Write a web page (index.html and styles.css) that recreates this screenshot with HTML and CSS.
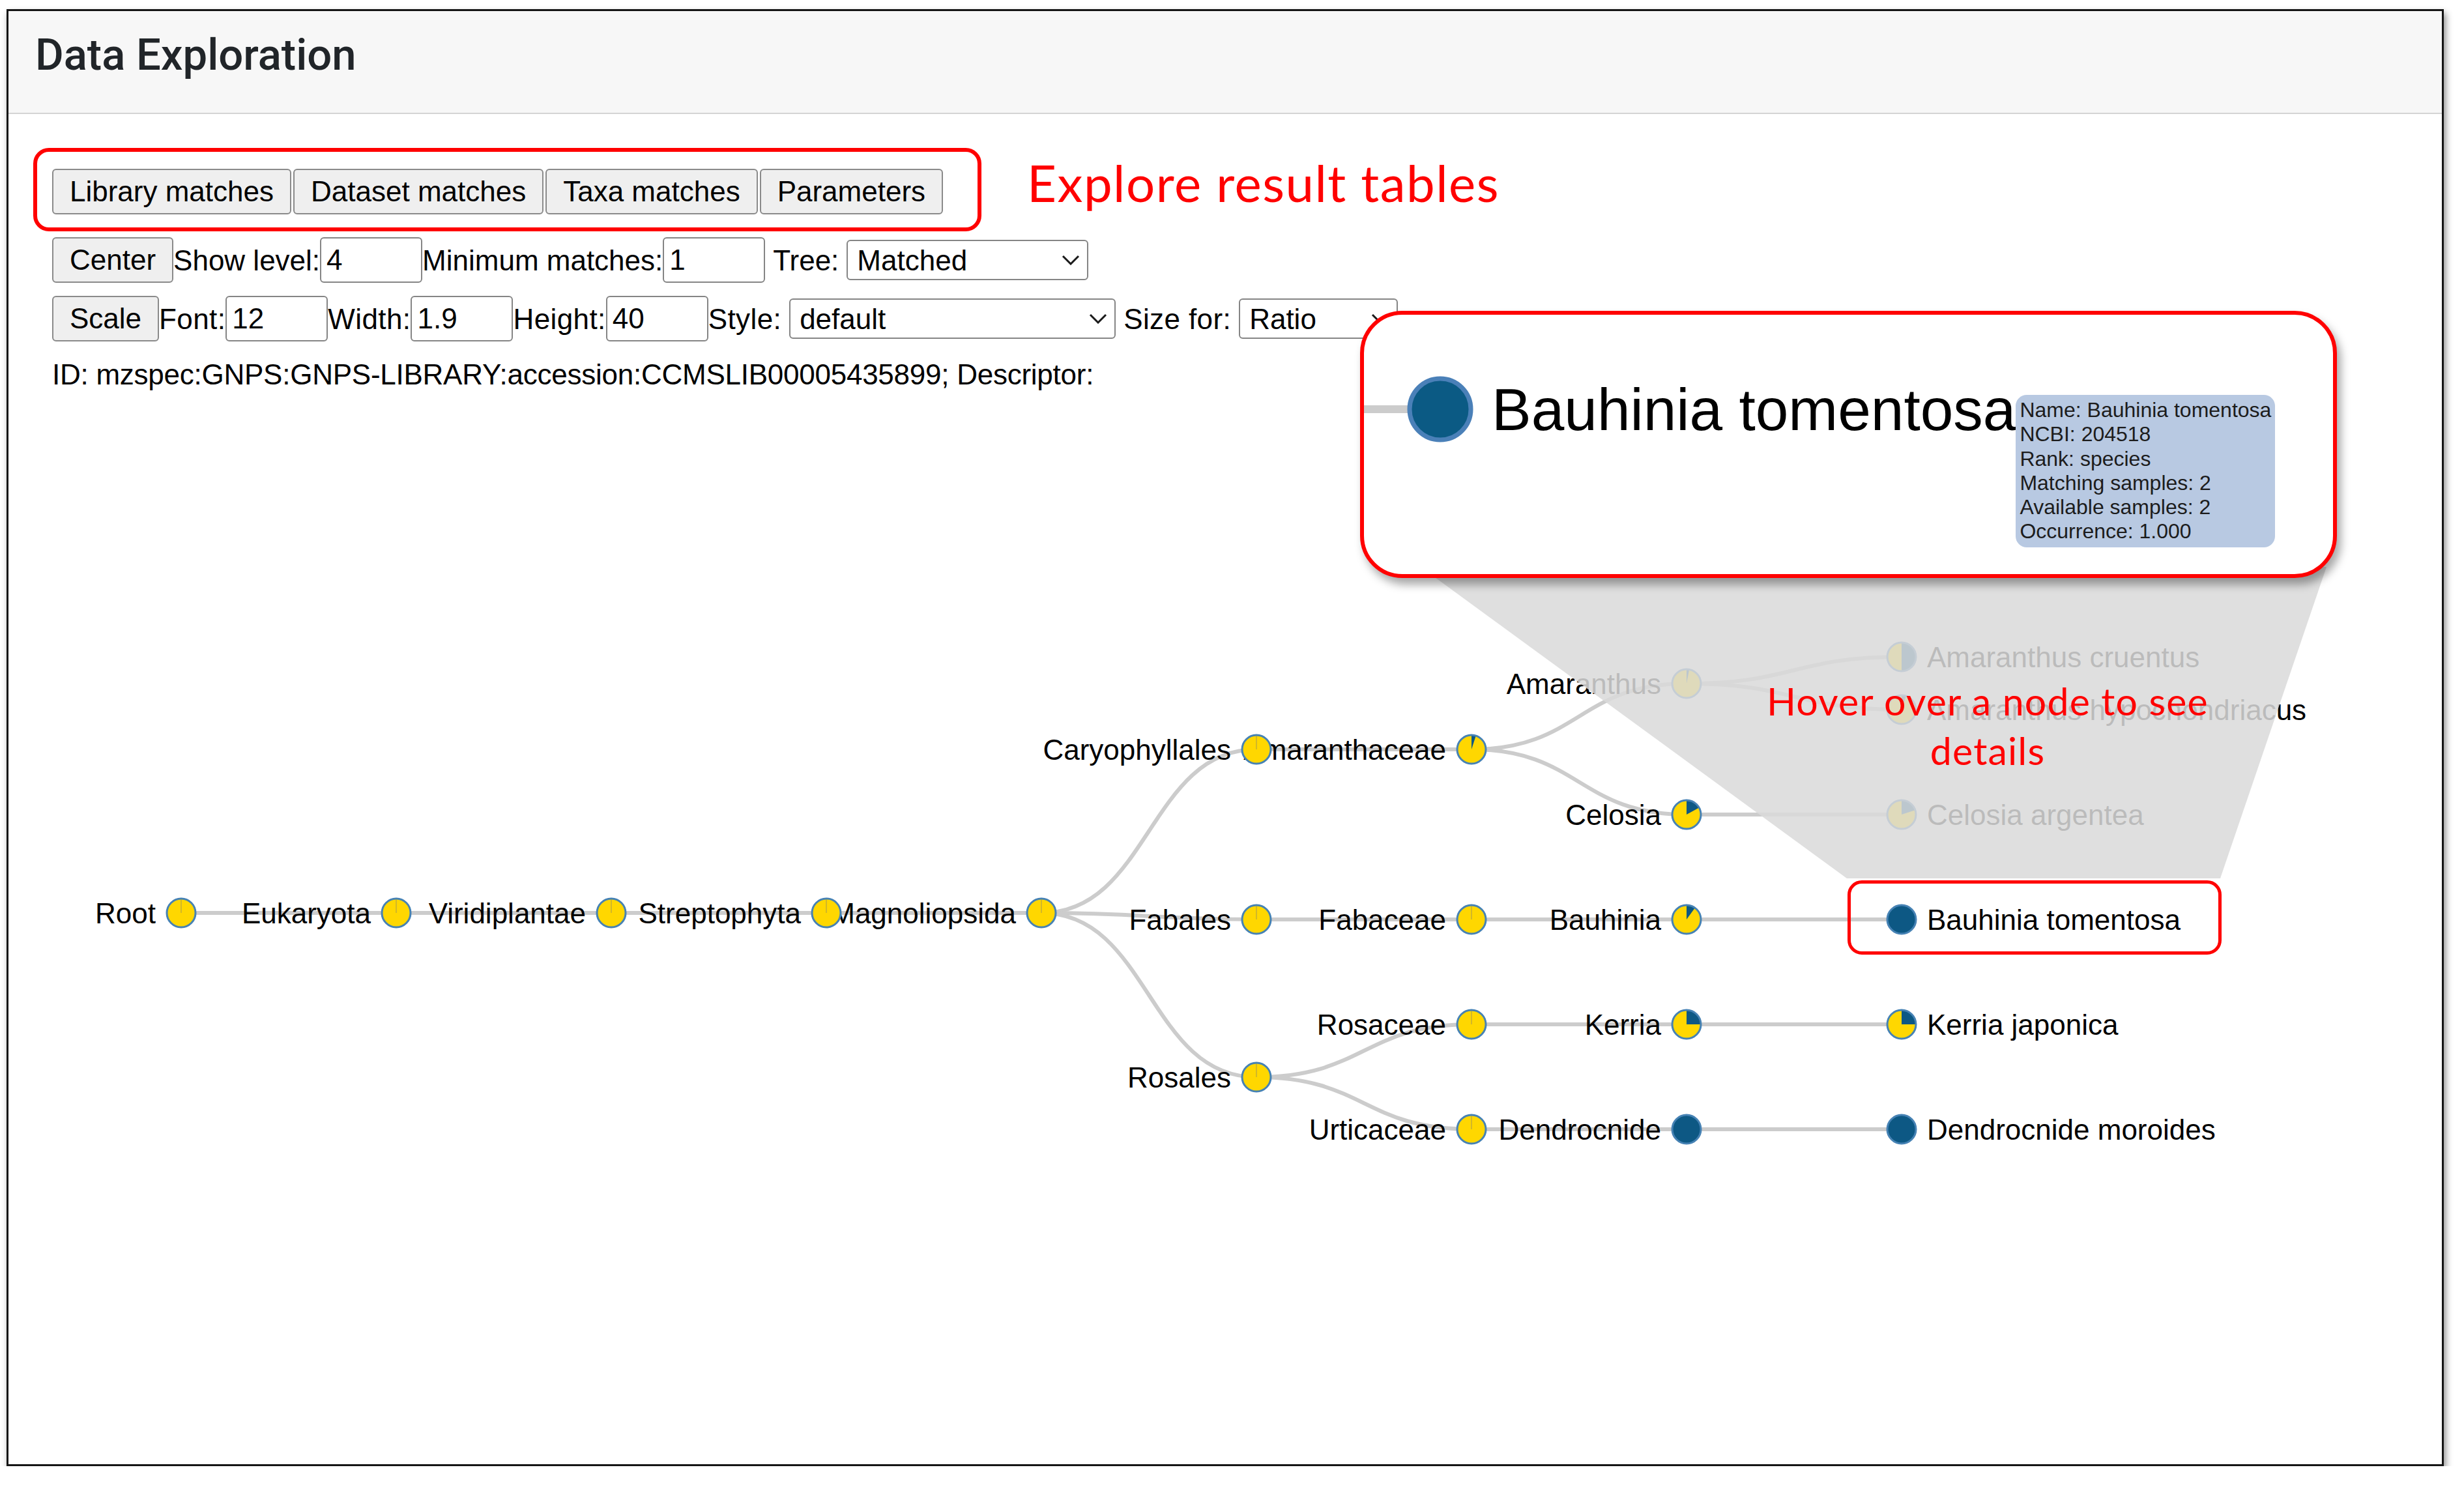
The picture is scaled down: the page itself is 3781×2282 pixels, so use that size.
FILE: index.html
```html
<!DOCTYPE html>
<html lang="en">
<head>
<meta charset="utf-8">
<title>Data Exploration</title>
<link rel="stylesheet" href="styles.css">
</head>
<body>
<div class="frame">
  <div class="card-header"><h1 class="title">Data Exploration</h1></div>
  <div class="card-body">
    <div class="row row-tabs">
      <button class="btn">Library matches</button>
      <button class="btn">Dataset matches</button>
      <button class="btn">Taxa matches</button>
      <button class="btn">Parameters</button>
    </div>
    <div class="row row-2">
      <button class="btn">Center</button>
      <span class="lbl">Show level:</span>
      <input class="num" value="4">
      <span class="lbl">Minimum matches:</span>
      <input class="num" value="1">
      <span class="lbl spaced">Tree:</span>
      <span class="select-wrap sel-tree"><select><option>Matched</option></select><svg class="chev" viewBox="0 0 28 16"><path d="M2 2 L14 14 L26 2" /></svg></span>
    </div>
    <div class="row row-3">
      <button class="btn">Scale</button>
      <span class="lbl">Font:</span>
      <input class="num" value="12">
      <span class="lbl">Width:</span>
      <input class="num" value="1.9">
      <span class="lbl">Height:</span>
      <input class="num" value="40">
      <span class="lbl trail">Style:</span>
      <span class="select-wrap sel-style"><select><option>default</option></select><svg class="chev" viewBox="0 0 28 16"><path d="M2 2 L14 14 L26 2" /></svg></span>
      <span class="lbl spaced">Size for:</span>
      <span class="select-wrap sel-ratio"><select><option>Ratio</option></select><svg class="chev" viewBox="0 0 28 16"><path d="M2 2 L14 14 L26 2" /></svg></span>
    </div>
    <div class="id-line">ID: mzspec:GNPS:GNPS-LIBRARY:accession:CCMSLIB00005435899; Descriptor:</div>
  </div>

  <svg class="tree" width="3734" height="1647" viewBox="13 600 3734 1647">
    <g class="links">
      <path d="M278,1401 L608,1401"/>
      <path d="M608,1401 L938,1401"/>
      <path d="M938,1401 L1268,1401"/>
      <path d="M1268,1401 L1598,1401"/>
      <path d="M1598,1401 C1763,1401 1763,1150 1928,1150"/>
      <path d="M1598,1401 C1763,1401 1763,1411 1928,1411"/>
      <path d="M1598,1401 C1763,1401 1763,1653 1928,1653"/>
      <path d="M1928,1150 L2258,1150"/>
      <path d="M1928,1411 L2258,1411"/>
      <path d="M1928,1653 C2093,1653 2093,1572 2258,1572"/>
      <path d="M1928,1653 C2093,1653 2093,1733 2258,1733"/>
      <path d="M2258,1150 C2423,1150 2423,1049 2588,1049"/>
      <path d="M2258,1150 C2423,1150 2423,1250 2588,1250"/>
      <path d="M2258,1411 L2588,1411"/>
      <path d="M2258,1572 L2588,1572"/>
      <path d="M2258,1733 L2588,1733"/>
      <path d="M2588,1049 C2753,1049 2753,1008 2918,1008"/>
      <path d="M2588,1049 C2753,1049 2753,1089 2918,1089"/>
      <path d="M2588,1250 L2918,1250"/>
      <path d="M2588,1411 L2918,1411"/>
      <path d="M2588,1572 L2918,1572"/>
      <path d="M2588,1733 L2918,1733"/>
    </g>
    <g class="labels">
      <text class="end" x="239" y="1417">Root</text>
      <text class="end" x="569" y="1417">Eukaryota</text>
      <text class="end" x="899" y="1417">Viridiplantae</text>
      <text class="end" x="1229" y="1417">Streptophyta</text>
      <text class="end" x="1559" y="1417">Magnoliopsida</text>
      <text class="end" x="1889" y="1166">Caryophyllales</text>
      <text class="end" x="1889" y="1427">Fabales</text>
      <text class="end" x="1889" y="1669">Rosales</text>
      <text class="end" x="2219" y="1166">Amaranthaceae</text>
      <text class="end" x="2219" y="1427">Fabaceae</text>
      <text class="end" x="2219" y="1588">Rosaceae</text>
      <text class="end" x="2219" y="1749">Urticaceae</text>
      <text class="end" x="2549" y="1065">Amaranthus</text>
      <text class="end" x="2549" y="1266">Celosia</text>
      <text class="end" x="2549" y="1427">Bauhinia</text>
      <text class="end" x="2549" y="1588">Kerria</text>
      <text class="end" x="2549" y="1749">Dendrocnide</text>
      <text x="2957" y="1024">Amaranthus cruentus</text>
      <text x="2957" y="1105">Amaranthus hypochondriacus</text>
      <text x="2957" y="1266">Celosia argentea</text>
      <text x="2957" y="1427">Bauhinia tomentosa</text>
      <text x="2957" y="1588">Kerria japonica</text>
      <text x="2957" y="1749">Dendrocnide moroides</text>
    </g>
    <g class="nodes">
      <g transform="translate(278,1401)"><circle class="y" r="22"/><path class="tick" d="M0,0 L0,-22"/><circle class="ring" r="22"/></g>
      <g transform="translate(608,1401)"><circle class="y" r="22"/><path class="tick" d="M0,0 L0,-22"/><circle class="ring" r="22"/></g>
      <g transform="translate(938,1401)"><circle class="y" r="22"/><path class="tick" d="M0,0 L0,-22"/><circle class="ring" r="22"/></g>
      <g transform="translate(1268,1401)"><circle class="y" r="22"/><path class="tick" d="M0,0 L0,-22"/><circle class="ring" r="22"/></g>
      <g transform="translate(1598,1401)"><circle class="y" r="22"/><path class="tick" d="M0,0 L0,-22"/><circle class="ring" r="22"/></g>
      <g transform="translate(1928,1150)"><circle class="y" r="22"/><path class="tick" d="M0,0 L0,-22"/><circle class="ring" r="22"/></g>
      <g transform="translate(1928,1411)"><circle class="y" r="22"/><path class="tick" d="M0,0 L0,-22"/><circle class="ring" r="22"/></g>
      <g transform="translate(1928,1653)"><circle class="y" r="22"/><path class="tick" d="M0,0 L0,-22"/><circle class="ring" r="22"/></g>
      <g transform="translate(2258,1150)"><circle class="y" r="22"/><path class="b" d="M0,0 L0,-22 A22,22 0 0 1 6.8,-20.92 Z"/><circle class="ring" r="22"/></g>
      <g transform="translate(2258,1411)"><circle class="y" r="22"/><path class="tick" d="M0,0 L0,-22"/><circle class="ring" r="22"/></g>
      <g transform="translate(2258,1572)"><circle class="y" r="22"/><path class="tick" d="M0,0 L0,-22"/><circle class="ring" r="22"/></g>
      <g transform="translate(2258,1733)"><circle class="y" r="22"/><path class="tick" d="M0,0 L0,-22"/><circle class="ring" r="22"/></g>
      <g transform="translate(2588,1049)"><circle class="y" r="22"/><path class="b" d="M0,0 L0,-22 A22,22 0 0 1 4.12,-21.61 Z"/><circle class="ring" r="22"/></g>
      <g transform="translate(2588,1250)"><circle class="y" r="22"/><path class="b" d="M0,0 L0,-22 A22,22 0 0 1 19.27,-10.6 Z"/><circle class="ring" r="22"/></g>
      <g transform="translate(2588,1411)"><circle class="y" r="22"/><path class="b" d="M0,0 L0,-22 A22,22 0 0 1 12.93,-17.8 Z"/><circle class="ring" r="22"/></g>
      <g transform="translate(2588,1572)"><circle class="y" r="22"/><path class="b" d="M0,0 L0,-22 A22,22 0 0 1 22,0 Z"/><circle class="ring" r="22"/></g>
      <g transform="translate(2588,1733)"><circle class="full" r="22"/><circle class="ring" r="22"/></g>
      <g transform="translate(2918,1008)"><circle class="y" r="22"/><path class="b" d="M0,0 L0,-22 A22,22 0 0 1 0,22 Z"/><circle class="ring" r="22"/></g>
      <g transform="translate(2918,1089)"><circle class="y" r="22"/><path class="b" d="M0,0 L0,-22 A22,22 0 0 1 6.8,-20.92 Z"/><circle class="ring" r="22"/></g>
      <g transform="translate(2918,1250)"><circle class="y" r="22"/><path class="b" d="M0,0 L0,-22 A22,22 0 0 1 20.92,-6.8 Z"/><circle class="ring" r="22"/></g>
      <g transform="translate(2918,1411)"><circle class="full" r="22"/><circle class="ring" r="22"/></g>
      <g transform="translate(2918,1572)"><circle class="y" r="22"/><path class="b" d="M0,0 L0,-22 A22,22 0 0 1 22,0 Z"/><circle class="ring" r="22"/></g>
      <g transform="translate(2918,1733)"><circle class="full" r="22"/><circle class="ring" r="22"/></g>
    </g>
    <polygon class="lens" points="2180,870 3570,870 3407,1348 2834,1348"/>
  </svg>

  <div class="note-box"></div>
  <div class="note-explore">Explore result tables</div>

  <div class="note-hover">Hover over a node to see<br>details</div>
  <div class="pointer-box"></div>

  <div class="callout">
    <div class="zoom-link"></div>
    <svg class="zoom-node" viewBox="0 0 102 102"><circle cx="51" cy="51" r="47" /></svg>
    <div class="zoom-name">Bauhinia tomentosa</div>
    <div class="tooltip">Name: Bauhinia tomentosa<br>NCBI: 204518<br>Rank: species<br>Matching samples: 2<br>Available samples: 2<br>Occurrence: 1.000</div>
  </div>
</div>
</body>
</html>
```
FILE: styles.css
```css
html, body {
  margin: 0;
  padding: 0;
  background: #ffffff;
}

body {
  font-family: "Liberation Sans", Arial, sans-serif;
  color: #000;
}

.frame {
  position: relative;
  box-sizing: border-box;
  width: 3740px;
  height: 2236px;
  margin: 14px 0 0 10px;
  border: 3px solid #151515;
  background: #ffffff;
  box-shadow: 3px 6px 10px rgba(0, 0, 0, 0.45);
  overflow: hidden;
}

.card-header {
  box-sizing: border-box;
  height: 158px;
  padding: 27px 0 0 41px;
  background: #f7f7f7;
  border-bottom: 2px solid #d4d4d4;
}

.title {
  margin: 0;
  font-family: Roboto, "Liberation Sans", sans-serif;
  font-weight: 500;
  font-size: 67px;
  line-height: 80px;
  color: #212529;
}

.card-body {
  padding: 84px 0 0 67px;
}

.row {
  display: flex;
  align-items: center;
}

.row-tabs {
  gap: 3px;
}

.row-2 {
  margin-top: 35px;
}

.row-3 {
  margin-top: 20px;
}

.btn {
  box-sizing: border-box;
  height: 70px;
  padding: 0 25px;
  font-family: "Liberation Sans", Arial, sans-serif;
  font-size: 44px;
  color: #000;
  background: #efefef;
  border: 2px solid #8a8a8a;
  border-radius: 6px;
}

.lbl {
  font-size: 44px;
  line-height: 51px;
  white-space: nowrap;
}

.row-3 .lbl {
  letter-spacing: 0.4px;
}

.spaced {
  margin: 0 12px;
}

.trail {
  margin-right: 12px;
}

.num {
  box-sizing: border-box;
  width: 157px;
  height: 70px;
  padding: 0 8px;
  font-family: "Liberation Sans", Arial, sans-serif;
  font-size: 44px;
  color: #000;
  background: #fff;
  border: 2px solid #858585;
  border-radius: 6px;
}

.select-wrap {
  position: relative;
  display: block;
}

.select-wrap select {
  appearance: none;
  -webkit-appearance: none;
  display: block;
  box-sizing: border-box;
  height: 62px;
  padding: 0 0 0 14px;
  font-family: "Liberation Sans", Arial, sans-serif;
  font-size: 44px;
  color: #000;
  background: #fff;
  border: 2px solid #858585;
  border-radius: 6px;
}

.sel-tree select { width: 371px; }
.sel-style select { width: 501px; }
.sel-ratio select { width: 244px; }

.chev {
  position: absolute;
  right: 13px;
  top: 23px;
  width: 28px;
  height: 16px;
  fill: none;
  stroke: #1a1a1a;
  stroke-width: 3;
}

.id-line {
  margin-top: 25px;
  font-size: 44px;
  line-height: 51px;
  letter-spacing: -0.25px;
  white-space: nowrap;
}

.tree {
  display: block;
}

.links path {
  fill: none;
  stroke: #cccccc;
  stroke-width: 6;
}

.labels text {
  font-family: "Liberation Sans", Arial, sans-serif;
  font-size: 44px;
  fill: #000;
}

.labels text.end {
  text-anchor: end;
}

.nodes .y { fill: #ffd700; }
.nodes .b { fill: #0d5884; }
.nodes .full { fill: #0d5884; }
.nodes .tick { stroke: rgba(120, 120, 120, 0.55); stroke-width: 1.2; fill: none; }
.nodes .ring { fill: none; stroke: #4682b4; stroke-width: 3; }

.lens {
  fill: rgba(218, 218, 218, 0.86);
}

/* annotation overlays */
.note-box {
  position: absolute;
  left: 38px;
  top: 210px;
  width: 1455px;
  height: 128px;
  box-sizing: border-box;
  border: 6px solid #ff0000;
  border-radius: 24px;
}

.note-explore {
  position: absolute;
  left: 1563px;
  top: 218px;
  font-family: Lato, "Open Sans", sans-serif;
  font-size: 78px;
  line-height: 91px;
  letter-spacing: 1.5px;
  color: #ff0000;
  white-space: nowrap;
}

.note-hover {
  position: absolute;
  left: 2587px;
  top: 1021px;
  width: 900px;
  text-align: center;
  font-family: Lato, "Open Sans", sans-serif;
  font-size: 59px;
  line-height: 76px;
  letter-spacing: 1.2px;
  color: #ff0000;
}

.pointer-box {
  position: absolute;
  left: 2822px;
  top: 1334px;
  width: 574px;
  height: 114px;
  box-sizing: border-box;
  border: 5px solid #ff0000;
  border-radius: 22px;
}

.callout {
  position: absolute;
  left: 2074px;
  top: 460px;
  width: 1499px;
  height: 410px;
  box-sizing: border-box;
  display: flex;
  align-items: flex-start;
  border: 6px solid #ff0000;
  border-radius: 65px;
  background: #ffffff;
  box-shadow: 6px 10px 14px rgba(0, 0, 0, 0.35);
}

.zoom-link {
  flex: none;
  width: 70px;
  height: 12px;
  margin-top: 139px;
  background: #cccccc;
}

.zoom-node {
  flex: none;
  display: block;
  width: 102px;
  height: 102px;
  margin: 94px 0 0 -4px;
}

.zoom-node circle {
  fill: #0b5a84;
  stroke: #4a80b8;
  stroke-width: 7;
}

.zoom-name {
  flex: none;
  margin: 96px 0 0 28px;
  font-size: 91px;
  line-height: 100px;
  color: #000;
  white-space: nowrap;
}

.tooltip {
  flex: none;
  margin-top: 123px;
  padding: 5px 6px;
  background: #b8c9e2;
  border-radius: 17px;
  font-size: 32px;
  line-height: 37.3px;
  color: #1c1c1c;
  white-space: nowrap;
}
```
